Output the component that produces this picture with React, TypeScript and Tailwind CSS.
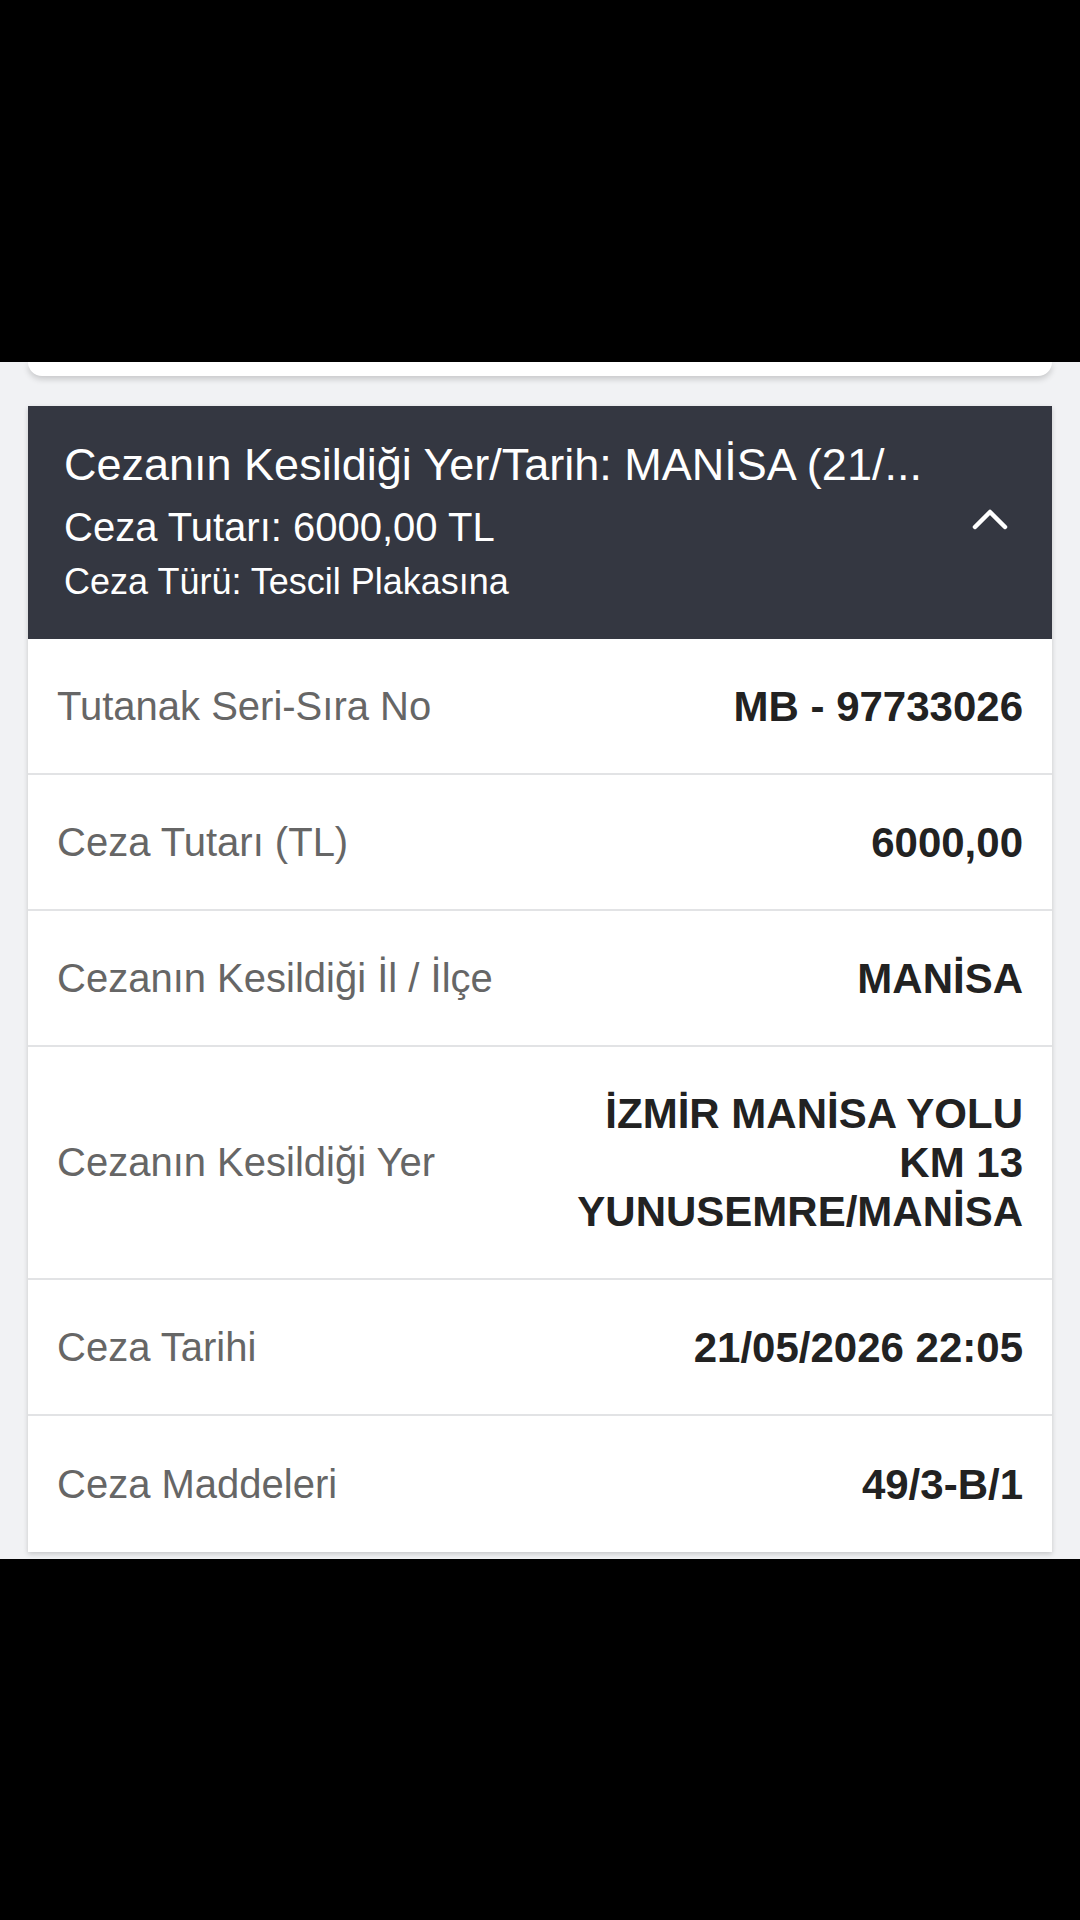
import React from "react";

type Row = {
  label: string;
  value: string[];
};

const rows: Row[] = [
  { label: "Tutanak Seri-Sıra No", value: ["MB - 97733026"] },
  { label: "Ceza Tutarı (TL)", value: ["6000,00"] },
  { label: "Cezanın Kesildiği İl / İlçe", value: ["MANİSA"] },
  {
    label: "Cezanın Kesildiği Yer",
    value: ["İZMİR MANİSA YOLU", "KM 13", "YUNUSEMRE/MANİSA"],
  },
  { label: "Ceza Tarihi", value: ["21/05/2026 22:05"] },
  { label: "Ceza Maddeleri", value: ["49/3-B/1"] },
];

function ChevronUpIcon() {
  return (
    <svg width="36" height="24" viewBox="0 0 36 24" fill="none">
      <polyline
        points="3,20 18,5 33,20"
        stroke="white"
        strokeWidth="4.5"
        strokeLinecap="round"
        strokeLinejoin="round"
      />
    </svg>
  );
}

export default function App() {
  return (
    <div
      className="flex min-h-[1920px] w-[1080px] flex-col bg-black"
      style={{ fontFamily: "'Liberation Sans', Arial, sans-serif" }}
    >
      <div className="h-[362px] bg-black" />

      <div className="flex flex-col bg-[#f1f2f4] pb-[7px]">
        {/* tail of the previous card */}
        <div className="mx-[28px] h-[14px] rounded-b-[14px] bg-white shadow-[0_3px_6px_rgba(0,0,0,0.18)]" />

        <div className="mx-[28px] mt-[30px] flex flex-col bg-white shadow-[0_2px_5px_rgba(0,0,0,0.18)]">
          <div className="flex items-center bg-[#343741] pl-[36px] pr-[44px] pt-[34px] pb-[35px]">
            <div className="flex min-w-0 flex-1 flex-col text-white">
              <p className="whitespace-nowrap text-[45px] leading-[50px]">
                Cezanın Kesildiği Yer/Tarih: MANİSA (21/...
              </p>
              <p className="mt-[13px] text-[40px] leading-[48px]">
                Ceza Tutarı: 6000,00 TL
              </p>
              <p className="mt-[9px] text-[36px] leading-[44px]">
                Ceza Türü: Tescil Plakasına
              </p>
            </div>
            <div className="mb-[7px] flex shrink-0 items-center justify-center">
              <ChevronUpIcon />
            </div>
          </div>

          {rows.map((row, i) => (
            <div
              key={row.label}
              className={
                "flex items-center justify-between px-[29px] " +
                (row.value.length > 1 ? "py-[42px] " : "h-[136px] ") +
                (i < rows.length - 1 ? "border-b-2 border-[#e2e3e5]" : "")
              }
            >
              <span className="text-[40px] leading-[49px] text-[#666666]">
                {row.label}
              </span>
              <div className="flex flex-col items-end text-right text-[42px] font-bold leading-[49px] text-[#222222]">
                {row.value.map((v) => (
                  <span key={v}>{v}</span>
                ))}
              </div>
            </div>
          ))}
        </div>
      </div>

      <div className="flex-1 bg-black" />
    </div>
  );
}
